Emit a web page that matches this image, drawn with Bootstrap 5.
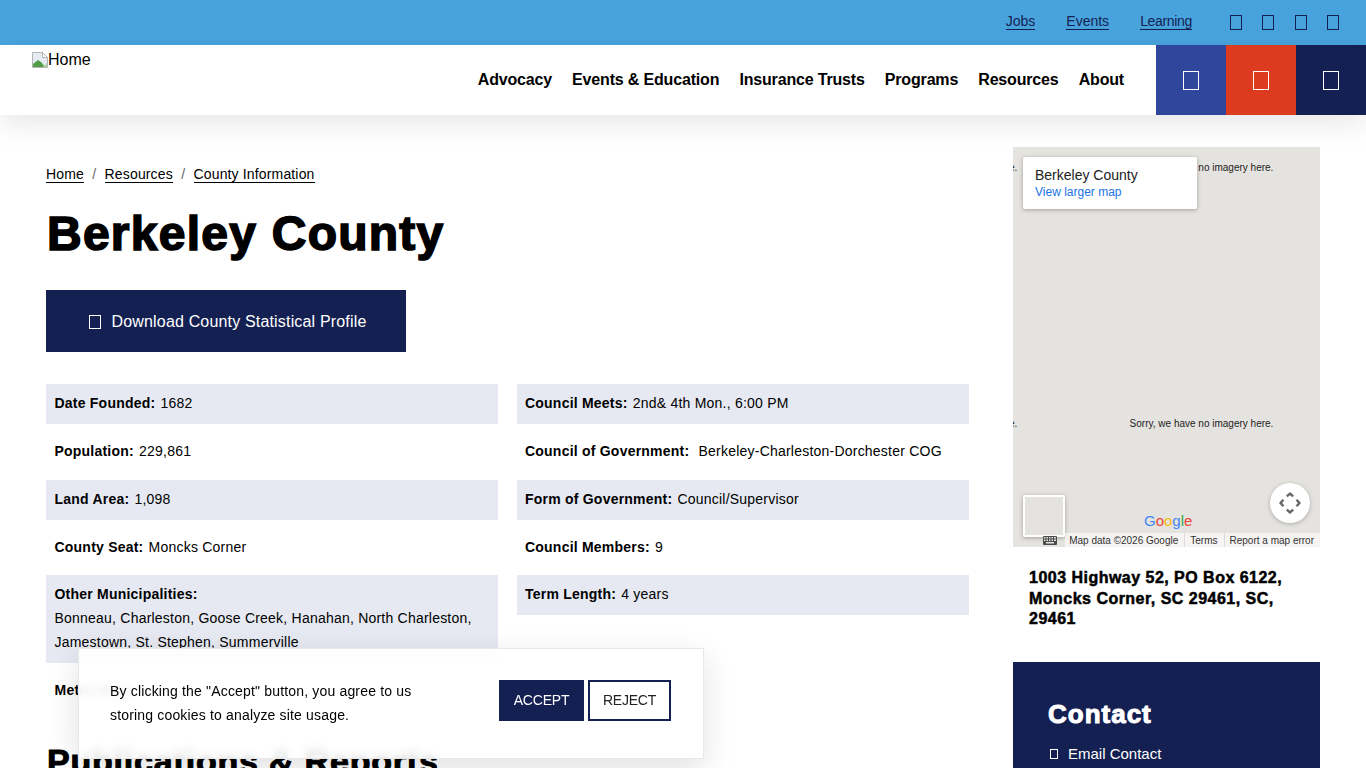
<!DOCTYPE html>
<html lang="en">
<head>
    <meta charset="UTF-8">
    <meta name="viewport" content="width=device-width, initial-scale=1.0">
    <title>Berkeley County</title>
    <link href="https://cdn.jsdelivr.net/npm/bootstrap@5.3.0/dist/css/bootstrap.min.css" rel="stylesheet">
    <style>
        :root {
            --navy: #141f52;
            --sky: #48a3dd;
            --stripe: #e6e9f1;
        }
        html, body {
            height: 768px;
            overflow: hidden;
        }
        body {
            font-family: "Liberation Sans", Arial, sans-serif;
            font-size: 14px;
            color: #000;
            background: #fff;
        }
        .tofu {
            display: inline-block;
            border: 1px solid currentColor;
            flex: none;
        }
        .top-strip {
            height: 45px;
            background: var(--sky);
            padding: 0 27px 2px 0;
            color: var(--navy);
        }
        .top-links {
            gap: 31px;
            margin-right: 38px;
        }
        .top-links a {
            color: var(--navy);
            text-decoration: none;
            border-bottom: 1px solid var(--navy);
            line-height: 15px;
        }
        .top-links a.tight-link {
            letter-spacing: -.35px;
        }
        .top-icons {
            gap: 20.4px;
            padding-top: 2px;
        }
        .top-icon {
            width: 12px;
            height: 15px;
        }
        .main-head {
            height: 70px;
            background: #fff;
            box-shadow: 0 8px 30px rgba(0, 0, 0, .1);
            position: relative;
        }
        .logo-link {
            padding: 7px 0 0 32px;
            font-size: 16px;
            line-height: 16px;
            color: #000;
            text-decoration: none;
        }
        .main-links {
            gap: 20.1px;
            margin-right: 32px;
        }
        .main-links a {
            font-size: 16px;
            font-weight: 700;
            letter-spacing: -.17px;
            color: #000;
            text-decoration: none;
        }
        .head-btn {
            width: 70px;
            height: 70px;
            color: #fff;
        }
        .head-btn .tofu {
            width: 16px;
            height: 19px;
        }
        .page-wrap {
            padding: 32px 46px 0;
            gap: 44px;
        }
        .page-main {
            width: 923px;
        }
        .page-side {
            width: 307px;
        }
        .crumbs {
            margin: 18px 0 0;
            font-size: 14px;
            line-height: 18px;
            letter-spacing: .15px;
            --bs-breadcrumb-divider-color: #666;
            --bs-breadcrumb-item-padding-x: 8.3px;
        }
        .crumbs a {
            color: #000;
            text-decoration: none;
            border-bottom: 1px solid #000;
        }
        .page-title {
            font-size: 48px;
            font-weight: 700;
            letter-spacing: 1.25px;
            -webkit-text-stroke: 1.6px #000;
            line-height: 56px;
            margin: 23px 0 28px 1px;
        }
        .dl-btn {
            width: 360px;
            height: 62px;
            border-radius: 0;
            background: var(--navy);
            color: #fff;
            font-size: 16px;
            letter-spacing: .17px;
            border: 0;
            gap: 11px;
            padding: 1px 0 0 3px;
        }
        .dl-btn:hover {
            background: var(--navy);
            color: #fff;
        }
        .dl-btn .tofu {
            width: 12px;
            height: 14px;
        }
        .stat-grid {
            display: grid;
            grid-template-columns: 452px 452px;
            column-gap: 19px;
            margin-top: 32px;
        }
        .stat-item {
            padding: 7px 8px 9px 8.5px;
            line-height: 24px;
            letter-spacing: .22px;
        }
        .stat-item b {
            margin-right: 1px;
        }
        .stat-right .stat-item {
            padding-left: 8px;
        }
        .stat-shaded {
            background: var(--stripe);
        }
        .stat-short {
            height: 39px;
        }
        .section-title {
            font-size: 34px;
            font-weight: 700;
            letter-spacing: .8px;
            -webkit-text-stroke: 1px #000;
            line-height: 38px;
            margin: 31px 0 0 1px;
        }
        .map-frame {
            height: 400px;
            background: #e5e3df;
            position: relative;
            overflow: hidden;
        }
        .no-imagery {
            position: absolute;
            width: 256px;
            text-align: center;
            font-size: 10px;
            line-height: 12px;
            color: #222;
        }
        .map-info {
            position: absolute;
            left: 10px;
            top: 10px;
            width: 174px;
            height: 52px;
            background: #fff;
            border-radius: 2px;
            box-shadow: 0 1px 4px rgba(0, 0, 0, .3);
            padding: 10px 12px;
            font-size: 14px;
            line-height: 16px;
            color: #222;
        }
        .map-info a {
            display: block;
            margin-top: 2px;
            font-size: 12px;
            line-height: 14px;
            color: #1a73e8;
            text-decoration: none;
        }
        .map-thumb {
            position: absolute;
            left: 10px;
            top: 348px;
            width: 42px;
            height: 42px;
            border: 2px solid #fff;
            border-radius: 2px;
            box-shadow: 0 1px 4px rgba(0, 0, 0, .3);
        }
        .map-ctrl {
            position: absolute;
            left: 257px;
            top: 336px;
            width: 40px;
            height: 40px;
            background: #fff;
            border-radius: 50%;
            box-shadow: 0 1px 4px rgba(0, 0, 0, .25);
        }
        .map-logo {
            position: absolute;
            left: 131px;
            top: 365px;
            font-size: 15px;
            line-height: 17px;
        }
        .map-attrib {
            position: absolute;
            left: 52px;
            right: 0;
            bottom: 0;
            height: 14px;
            background: rgba(255, 255, 255, .6);
            font-size: 10px;
            line-height: 15px;
            color: #333;
            gap: 6px;
            padding: 0 6px 0 4px;
        }
        .map-attrib span + span {
            border-left: 1px solid #ddd;
            padding-left: 5px;
        }
        .map-keys {
            position: absolute;
            left: 30px;
            bottom: 2px;
        }
        .side-address {
            font-size: 16px;
            font-weight: 700;
            line-height: 20.5px;
            letter-spacing: .48px;
            -webkit-text-stroke: .5px #000;
            padding: 21px 16px 0;
            margin: 0 0 32px;
        }
        .contact-box {
            height: 200px;
            background: var(--navy);
            color: #fff;
            padding: 37px 35px;
        }
        .contact-box h2 {
            font-size: 26px;
            font-weight: 700;
            line-height: 30px;
            letter-spacing: 1px;
            -webkit-text-stroke: 1px #fff;
            margin: 0 0 15px;
        }
        .contact-link {
            color: #fff;
            text-decoration: none;
            font-size: 15px;
            line-height: 20px;
            gap: 10px;
            padding-left: 2px;
        }
        .contact-link .tofu {
            width: 8px;
            height: 10px;
        }
        .cookie-box {
            position: fixed;
            left: 78px;
            top: 648px;
            width: 626px;
            height: 111px;
            background: rgba(255, 255, 255, .9);
            -webkit-backdrop-filter: blur(5px);
            backdrop-filter: blur(5px);
            border: 1px solid #e8e8e8;
            box-shadow: 0 10px 30px rgba(0, 0, 0, .12);
            padding: 31px 32px 0 31px;
            z-index: 10;
        }
        .cookie-box p {
            width: 320px;
            line-height: 24px;
            letter-spacing: .17px;
            margin: -1px 0 0;
        }
        .cookie-btn {
            height: 41px;
            border-radius: 0;
            border: 2px solid var(--navy);
            font-size: 14px;
            letter-spacing: -.2px;
            padding: 0;
        }
        .cookie-accept {
            width: 85px;
            background: var(--navy);
            color: #fff;
        }
        .cookie-reject {
            width: 83px;
            background: #fff;
            color: #222;
        }
    </style>
</head>
<body>
    <!-- Top strip -->
    <div class="top-strip d-flex align-items-center justify-content-end">
        <div class="top-links d-flex">
            <a href="#">Jobs</a>
            <a href="#">Events</a>
            <a href="#" class="tight-link">Learning</a>
        </div>
        <div class="top-icons d-flex">
            <span class="tofu top-icon"></span>
            <span class="tofu top-icon"></span>
            <span class="tofu top-icon"></span>
            <span class="tofu top-icon"></span>
        </div>
    </div>

    <!-- Main header -->
    <header class="main-head d-flex">
        <a class="logo-link d-flex align-items-start" href="#">
            <svg width="16" height="16" viewBox="0 0 16 16" aria-hidden="true">
                <path d="M.5.5h10l5 5v10H.5z" fill="#e6ebf4" stroke="#b4b4b4"/>
                <path d="M10.500.5v5h5z" fill="#fff" stroke="#b4b4b4"/>
                <path d="M1 15v-3l5-4 3 2 4 5z" fill="#4f9e45"/>
                <path d="M11 15l4-4v4z" fill="#a9d29e"/>
            </svg><span>Home</span>
        </a>
        <nav class="main-links d-flex align-items-center ms-auto">
            <a href="#">Advocacy</a>
            <a href="#">Events &amp; Education</a>
            <a href="#">Insurance Trusts</a>
            <a href="#">Programs</a>
            <a href="#">Resources</a>
            <a href="#">About</a>
        </nav>
        <a href="#" class="head-btn d-flex align-items-center justify-content-center" style="background:#2f469c"><span class="tofu"></span></a>
        <a href="#" class="head-btn d-flex align-items-center justify-content-center" style="background:#dd3b20"><span class="tofu"></span></a>
        <a href="#" class="head-btn d-flex align-items-center justify-content-center" style="background:#141f52"><span class="tofu"></span></a>
    </header>

    <div class="page-wrap d-flex align-items-start">
        <main class="page-main">
            <ol class="breadcrumb crumbs">
                <li class="breadcrumb-item"><a href="#">Home</a></li>
                <li class="breadcrumb-item"><a href="#">Resources</a></li>
                <li class="breadcrumb-item"><a href="#">County Information</a></li>
            </ol>
            <h1 class="page-title">Berkeley County</h1>
            <a href="#" class="btn dl-btn d-flex align-items-center justify-content-center">
                <span class="tofu"></span>Download County Statistical Profile
            </a>
            <div class="stat-grid">
                <div class="d-flex flex-column gap-2">
                    <div class="stat-item stat-shaded"><b>Date Founded:</b> 1682</div>
                    <div class="stat-item"><b>Population:</b> 229,861</div>
                    <div class="stat-item stat-shaded"><b>Land Area:</b> 1,098</div>
                    <div class="stat-item stat-short"><b>County Seat:</b> Moncks Corner</div>
                    <div class="stat-item stat-shaded"><b>Other Municipalities:</b><br>Bonneau, Charleston, Goose Creek, Hanahan, North Charleston, Jamestown, St. Stephen, Summerville</div>
                    <div class="stat-item"><b>Metro Area:</b></div>
                </div>
                <div class="stat-right d-flex flex-column gap-2">
                    <div class="stat-item stat-shaded"><b>Council Meets:</b> 2nd&amp; 4th Mon., 6:00 PM</div>
                    <div class="stat-item"><b>Council of Government:</b> &nbsp;Berkeley-Charleston-Dorchester COG</div>
                    <div class="stat-item stat-shaded"><b>Form of Government:</b> Council/Supervisor</div>
                    <div class="stat-item stat-short"><b>Council Members:</b> 9</div>
                    <div class="stat-item stat-shaded"><b>Term Length:</b> 4 years</div>
                </div>
            </div>
            <h2 class="section-title">Publications &amp; Reports</h2>
        </main>

        <aside class="page-side">
            <div class="map-frame">
                <div class="no-imagery" style="left:60.500px;top:15px">Sorry, we have no imagery here.</div>
                <div class="no-imagery" style="left:-195.500px;top:15px">Sorry, we have no imagery here.</div>
                <div class="no-imagery" style="left:60.500px;top:271px">Sorry, we have no imagery here.</div>
                <div class="no-imagery" style="left:-195.500px;top:271px">Sorry, we have no imagery here.</div>
                <div class="map-info">Berkeley County<a href="#">View larger map</a></div>
                <div class="map-thumb"></div>
                <div class="map-ctrl d-flex align-items-center justify-content-center">
                    <svg width="24" height="24" viewBox="0 0 24 24" fill="none" stroke="#666" stroke-width="2.400" aria-hidden="true">
                        <path d="M8.800 5.400 12 2.600l3.200 2.800M8.800 18.600l3.200 2.800 3.200-2.800M5.400 8.800 2.600 12l2.800 3.200M18.600 8.800l2.800 3.200-2.800 3.200"/>
                    </svg>
                </div>
                <div class="map-logo"><span style="color:#4285f4">G</span><span style="color:#ea4335">o</span><span style="color:#fbbc05">o</span><span style="color:#4285f4">g</span><span style="color:#34a853">l</span><span style="color:#ea4335">e</span></div>
                <div class="map-attrib d-flex justify-content-end">
                    <span>Map data ©2026 Google</span><span>Terms</span><span>Report a map error</span>
                </div>
                <svg class="map-keys" width="14" height="9" viewBox="0 0 14 9" aria-hidden="true">
                    <rect width="14" height="9" rx="1" fill="#4a4a4a"/>
                    <path d="M1 1h1.500v1.500H1zM3.500 1H5v1.500H3.500zM6 1h1.500v1.500H6zM8.500 1H10v1.500H8.500zM11 1h2v1.500h-2zM1 3.500h1.500V5H1zM3.500 3.500H5V5H3.500zM6 3.500h1.500V5H6zM8.500 3.500H10V5H8.500zM11 3.500h2V5h-2zM3 6h8v1.500H3z" fill="#e5e3df"/>
                </svg>
            </div>
            <p class="side-address">1003 Highway 52, PO Box 6122, Moncks Corner, SC 29461, SC, 29461</p>
            <div class="contact-box">
                <h2>Contact</h2>
                <a href="#" class="contact-link d-flex align-items-center"><span class="tofu"></span>Email Contact</a>
            </div>
        </aside>
    </div>

    <!-- Cookie notice -->
    <div class="cookie-box d-flex align-items-start justify-content-between">
        <p>By clicking the "Accept" button, you agree to us storing cookies to analyze site usage.</p>
        <div class="d-flex gap-1">
            <button type="button" class="btn cookie-btn cookie-accept">ACCEPT</button>
            <button type="button" class="btn cookie-btn cookie-reject">REJECT</button>
        </div>
    </div>

    <script src="https://cdn.jsdelivr.net/npm/bootstrap@5.3.0/dist/js/bootstrap.bundle.min.js"></script>
</body>
</html>
